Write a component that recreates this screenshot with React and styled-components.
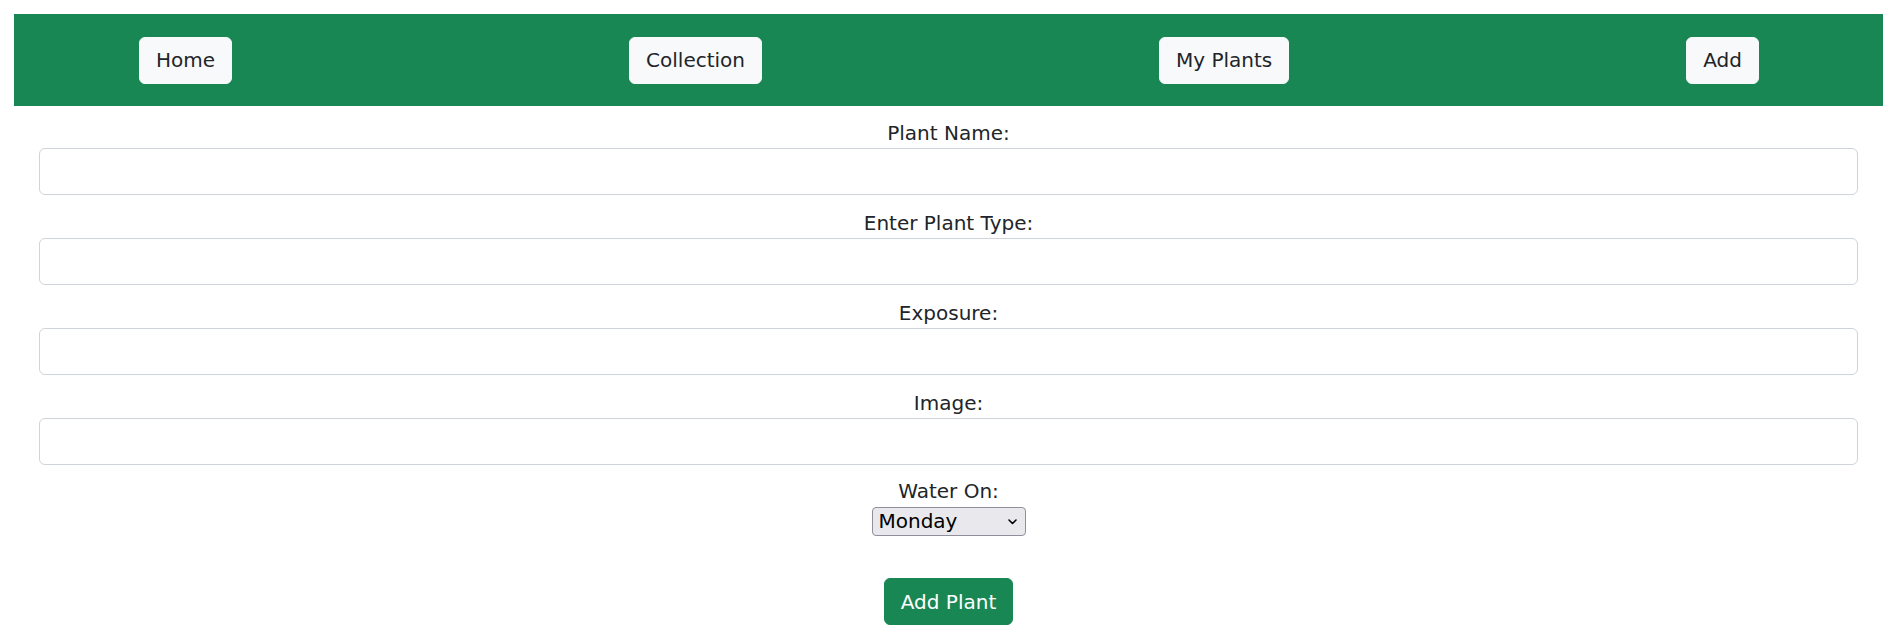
import React from "react";
import styled, { createGlobalStyle } from "styled-components";

const GlobalStyle = createGlobalStyle`
  html, body {
    margin: 0;
    padding: 0;
    background: #ffffff;
  }
  body {
    font-family: "DejaVu Sans", "Liberation Sans", sans-serif;
    color: #212529;
  }
  * { box-sizing: border-box; }
`;

const Page = styled.div`
  width: 1897px;
  padding: 14px 14px 0 14px;
`;

const NavBar = styled.nav`
  height: 92px;
  background: #198754;
  display: flex;
  align-items: center;
  justify-content: space-between;
  padding: 0 124px 0 125px;
`;

const NavButton = styled.button`
  height: 47px;
  padding: 0 16px;
  border: 1px solid #f8f9fa;
  border-radius: 6px;
  background: #f8f9fa;
  color: #212529;
  font-family: "DejaVu Sans", "Liberation Sans", sans-serif;
  font-size: 20px;
  line-height: 30px;
  cursor: pointer;
`;

const Form = styled.form`
  padding: 12px 25px 0 25px;
  display: flex;
  flex-direction: column;
  align-items: stretch;
`;

const Group = styled.div`
  display: flex;
  flex-direction: column;
  align-items: ${(p) => (p.$center ? "center" : "stretch")};
  margin-bottom: ${(p) => p.$mb ?? 13}px;
`;

const Label = styled.label`
  display: block;
  text-align: center;
  font-size: 20px;
  line-height: 30px;
  height: 30px;
  color: #212529;
`;

const TextInput = styled.input`
  height: 47px;
  width: 100%;
  padding: 0 16px;
  border: 1px solid #ced4da;
  border-radius: 6px;
  font-family: inherit;
  font-size: 20px;
  background: #fff;
  outline: none;
`;

const SelectWrap = styled.div`
  position: relative;
  width: 154px;
  height: 29px;
  margin-top: 1px;
`;

const Select = styled.select`
  appearance: none;
  -webkit-appearance: none;
  width: 154px;
  height: 29px;
  padding: 0 28px 0 6px;
  border: 1px solid #8f8f9d;
  border-radius: 4px;
  background: #e9e9ed;
  color: #000;
  font-family: "DejaVu Sans", "Liberation Sans", sans-serif;
  font-size: 20px;
  line-height: 27px;
`;

const Chevron = styled.svg`
  position: absolute;
  right: 9px;
  top: 12px;
  pointer-events: none;
`;

const SubmitButton = styled.button`
  align-self: center;
  margin-top: 42px;
  height: 47px;
  padding: 0 16px;
  border: 1px solid #198754;
  border-radius: 6px;
  background: #198754;
  color: #ffffff;
  font-family: "DejaVu Sans", "Liberation Sans", sans-serif;
  font-size: 20px;
  line-height: 30px;
  cursor: pointer;
`;

const navItems = ["Home", "Collection", "My Plants", "Add"];
const fields = ["Plant Name:", "Enter Plant Type:", "Exposure:", "Image:"];
const days = ["Monday", "Tuesday", "Wednesday", "Thursday", "Friday", "Saturday", "Sunday"];

export default function App() {
  return (
    <Page>
      <GlobalStyle />
      <NavBar>
        {navItems.map((n) => (
          <NavButton key={n}>{n}</NavButton>
        ))}
      </NavBar>
      <Form onSubmit={(e) => e.preventDefault()}>
        {fields.map((f, i) => (
          <Group key={f} $mb={i === fields.length - 1 ? 11 : 13}>
            <Label>{f}</Label>
            <TextInput type="text" />
          </Group>
        ))}
        <Group $center $mb={0}>
          <Label>Water On:</Label>
          <SelectWrap>
            <Select defaultValue="Monday">
              {days.map((d) => (
                <option key={d}>{d}</option>
              ))}
            </Select>
            <Chevron width="9" height="6" viewBox="0 0 9 6">
              <path d="M1 1 L4.5 4.5 L8 1" fill="none" stroke="#000" strokeWidth="1.6" strokeLinecap="round" strokeLinejoin="round" />
            </Chevron>
          </SelectWrap>
        </Group>
        <SubmitButton type="submit">Add Plant</SubmitButton>
      </Form>
    </Page>
  );
}
